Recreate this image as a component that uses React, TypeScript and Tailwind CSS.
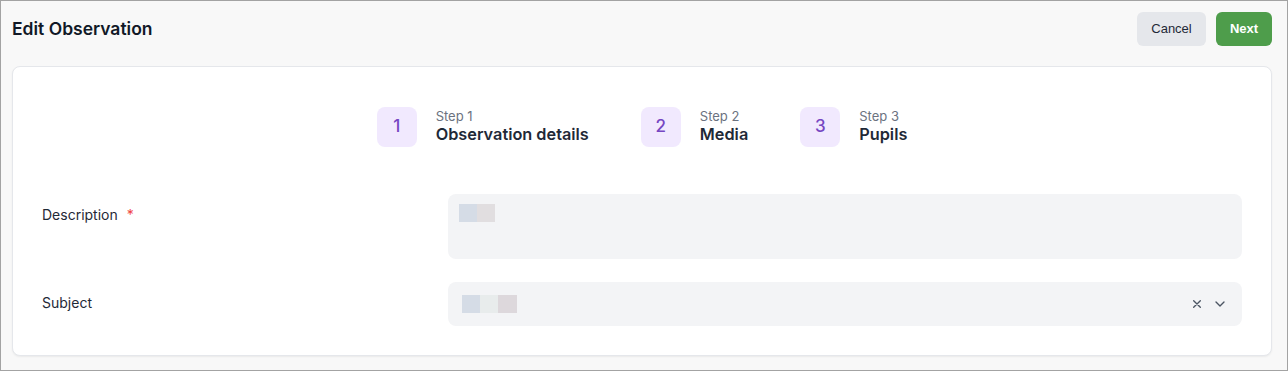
import React from "react";

function Step({ n, label, title }: { n: number; label: string; title: string }) {
  return (
    <div className="flex items-center gap-[19px]">
      <div className="flex h-10 w-10 items-center justify-center rounded-lg bg-[#f1e9fe] text-[17px] font-medium text-[#7646c2]">
        {n}
      </div>
      <div className="flex flex-col -mt-[2px]">
        <span className="text-[13px] leading-[16px] text-[#6b7280]">{label}</span>
        <span className="text-[16.3px] font-semibold leading-[20px] text-[#1f2937]">{title}</span>
      </div>
    </div>
  );
}

export default function App() {
  return (
    <div
      className="h-[371px] w-[1288px] border border-[#a3a3a3] bg-[#f8f8f8]"
      style={{ fontFamily: "Inter, 'Noto Sans', sans-serif" }}
    >
      <div className="flex items-center justify-between pl-[11px] pr-[15px] pt-[11px]">
        <h1 className="mt-[1px] text-[17.5px] font-semibold text-[#111827]">Edit Observation</h1>
        <div className="flex items-center gap-[10px]" style={{ fontFamily: "'Liberation Sans', Arial, sans-serif" }}>
          <button className="h-[34px] w-[69px] rounded-md bg-[#e5e7eb] text-[13px] text-[#1f2937]">Cancel</button>
          <button className="h-[34px] w-[56px] rounded-md bg-[#4e9d4b] text-[13px] font-bold text-white">Next</button>
        </div>
      </div>
      <div className="ml-[11px] mr-[15px] mt-[20px] rounded-lg border border-[#e5e7eb] bg-white px-[29px] pb-[29px] pt-[40px] shadow-[0_1px_2px_rgba(0,0,0,0.06)]">
        <div className="flex justify-center gap-[52px]">
          <Step n={1} label="Step 1" title="Observation details" />
          <Step n={2} label="Step 2" title="Media" />
          <Step n={3} label="Step 3" title="Pupils" />
        </div>
        <div className="mt-[47px] flex">
          <div className="w-[406px] pt-[10px] text-[14px] text-[#1f2937]">
            Description <span className="ml-[5px] text-[#ef4444]">*</span>
          </div>
          <div className="h-[65px] flex-1 rounded-lg bg-[#f3f4f6] pl-[11px] pt-[10px]">
            <div className="flex">
              <div className="h-[18px] w-[18px] bg-[#d5dce6]" />
              <div className="h-[18px] w-[18px] bg-[#e1dee0]" />
            </div>
          </div>
        </div>
        <div className="mt-[23px] flex">
          <div className="flex w-[406px] items-center pb-[3px] text-[14px] text-[#1f2937]">Subject</div>
          <div className="flex h-[44px] flex-1 items-center justify-between rounded-lg bg-[#f3f4f6] pl-[14px] pr-[14px]">
            <div className="flex">
              <div className="h-[18px] w-[18px] bg-[#d5dce6]" />
              <div className="h-[18px] w-[18px] bg-[#e8ecec]" />
              <div className="h-[18px] w-[19px] bg-[#ddd8dc]" />
            </div>
            <div className="flex items-center gap-[7px] text-[#4b5563]">
              <svg width="16" height="16" viewBox="0 0 24 24" fill="none" stroke="currentColor" strokeWidth="2" strokeLinecap="round">
                <path d="M7 7l10 10M17 7L7 17" />
              </svg>
              <svg width="16" height="16" viewBox="0 0 24 24" fill="none" stroke="currentColor" strokeWidth="2" strokeLinecap="round" strokeLinejoin="round">
                <path d="M6 9l6 6 6-6" />
              </svg>
            </div>
          </div>
        </div>
      </div>
    </div>
  );
}
